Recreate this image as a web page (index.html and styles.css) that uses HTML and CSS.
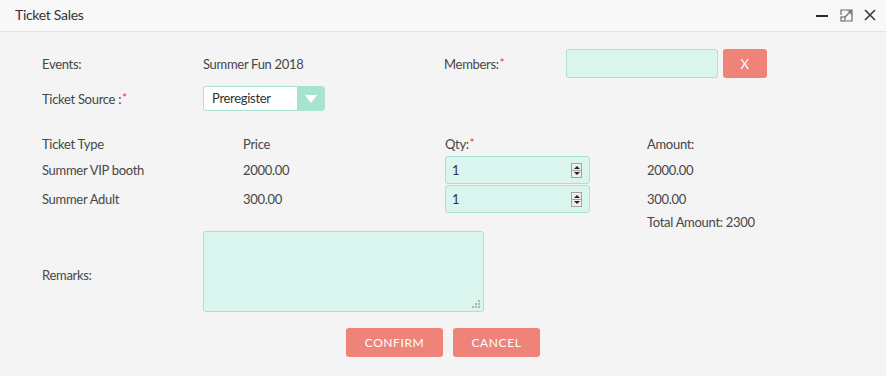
FILE: index.html
```html
<!DOCTYPE html>
<html lang="en">
<head>
    <meta charset="UTF-8">
    <title>Ticket Sales</title>
    <link rel="stylesheet" href="styles.css">
</head>
<body>
    <div class="dialog">
        <div class="dialog-header">
            <span class="dialog-title">Ticket Sales</span>
            <div class="dialog-tools">
                <svg width="13" height="12" viewBox="0 0 13 12"><path d="M0 7h12" stroke="#2b2b2b" stroke-width="2"/></svg>
                <svg width="13" height="13" viewBox="0 0 13 13" fill="none" stroke="#6d6d6d" stroke-width="1.2">
                    <path d="M1 6V1h11v11H6"/>
                    <rect x="1" y="8" width="4" height="4"/>
                    <path d="M5 8l6-6M7.5 2H11v3.5"/>
                </svg>
                <svg width="12" height="12" viewBox="0 0 12 12"><path d="M1 1l10 10M11 1L1 11" stroke="#3a3a3a" stroke-width="1.6"/></svg>
            </div>
        </div>

        <div class="dialog-body">
            <div class="row-event">
                <span>Events:</span>
                <span>Summer Fun 2018</span>
                <span>Members:<em class="req">*</em></span>
                <input type="text" class="field members-field">
                <button class="btn btn-clear">X</button>
            </div>

            <div class="row-source">
                <span>Ticket Source :<em class="req">*</em></span>
                <div class="select">
                    <span class="select-value">Preregister</span>
                    <span class="select-arrow"></span>
                </div>
            </div>

            <div class="ticket-table">
                <div class="ticket-head">
                    <span>Ticket Type</span>
                    <span>Price</span>
                    <span>Qty:<em class="req">*</em></span>
                    <span>Amount:</span>
                </div>
                <div class="ticket-row">
                    <span>Summer VIP booth</span>
                    <span>2000.00</span>
                    <div class="field qty-field"><span>1</span><span class="spinner"></span></div>
                    <span>2000.00</span>
                </div>
                <div class="ticket-row">
                    <span>Summer Adult</span>
                    <span>300.00</span>
                    <div class="field qty-field"><span>1</span><span class="spinner"></span></div>
                    <span>300.00</span>
                </div>
                <div class="ticket-total">
                    <span>Total Amount: 2300</span>
                </div>
            </div>

            <div class="row-remarks">
                <span class="remarks-label">Remarks:</span>
                <div class="remarks-wrap">
                    <textarea class="field remarks-field"></textarea>
                    <svg class="grip" width="8" height="8" viewBox="0 0 8 8" fill="#a9b4b0">
                        <rect x="6" y="0" width="2" height="2"/>
                        <rect x="3" y="3" width="2" height="2"/>
                        <rect x="6" y="3" width="2" height="2"/>
                        <rect x="0" y="6" width="2" height="2"/>
                        <rect x="3" y="6" width="2" height="2"/>
                        <rect x="6" y="6" width="2" height="2"/>
                    </svg>
                </div>
            </div>

            <div class="actions">
                <button class="btn btn-confirm">CONFIRM</button>
                <button class="btn btn-cancel">CANCEL</button>
            </div>
        </div>
    </div>
</body>
</html>
```

FILE: styles.css
```css
body {
    margin: 0;
    font-family: Lato, "Open Sans", sans-serif;
    font-size: 13px;
    letter-spacing: -0.3px;
    color: #464646;
    background-color: #f4f4f4;
}

.dialog {
    width: 886px;
    height: 376px;
}

.dialog-header {
    height: 31px;
    background-color: #f8f8f8;
    border-bottom: 1px solid #e4e4e4;
    display: flex;
    align-items: center;
    justify-content: space-between;
    padding: 0 10px 0 15px;
}

.dialog-title {
    font-size: 14px;
    color: #333;
    margin-top: -2px;
}

.dialog-tools {
    display: flex;
    align-items: center;
    gap: 11px;
    margin-top: -1px;
}

.dialog-body {
    padding: 17px 0 0 42px;
}

.req {
    color: #e0303a;
    font-style: normal;
    vertical-align: top;
    font-size: 11px;
    margin-left: 1px;
}

.field {
    background-color: #daf5ee;
    border: 1px solid #a8e2d1;
    border-radius: 3px;
    box-sizing: border-box;
    font-family: inherit;
    font-size: 13px;
    color: #333;
}

.row-event {
    display: grid;
    grid-template-columns: 161px 241px 122px 152px 49px;
    align-items: center;
    height: 29px;
}

.members-field {
    height: 29px;
    width: 152px;
}

.btn {
    border: none;
    border-radius: 3px;
    background-color: #f08379;
    color: #fff;
    font-family: inherit;
    font-size: 12px;
    letter-spacing: 0.6px;
    height: 29px;
}

.btn-clear {
    margin-left: 5px;
    width: 44px;
    font-size: 13px;
}

.row-source {
    display: grid;
    grid-template-columns: 161px auto;
    align-items: center;
    margin-top: 8px;
    height: 25px;
}

.select {
    display: flex;
    width: 122px;
    height: 25px;
    box-sizing: border-box;
    border: 1px solid #a8e2d1;
    border-radius: 3px;
    background-color: #fff;
    overflow: hidden;
}

.select-value {
    flex: 1;
    padding-left: 8px;
    line-height: 23px;
    color: #333;
}

.select-arrow {
    width: 27px;
    background-color: #a8e2d1;
    display: flex;
    align-items: center;
    justify-content: center;
}

.select-arrow::after {
    content: "";
    border-left: 6px solid transparent;
    border-right: 6px solid transparent;
    border-top: 8px solid #fff;
}

.ticket-table {
    margin-top: 21px;
}

.ticket-head,
.ticket-row,
.ticket-total {
    display: grid;
    grid-template-columns: 201px 202px 202px auto;
    align-items: center;
}

.ticket-head {
    height: 24px;
}

.ticket-row {
    height: 28px;
}

.ticket-row + .ticket-row {
    margin-top: 1px;
}

.ticket-total {
    height: 18px;
}

.ticket-total span {
    grid-column: 4;
}

.qty-field {
    width: 145px;
    height: 28px;
    display: flex;
    align-items: center;
    justify-content: space-between;
    padding: 0 7px 0 6px;
}

.spinner {
    width: 11px;
    height: 15px;
    box-sizing: border-box;
    border: 1px solid #a3a3a3;
    background:
        linear-gradient(#a3a3a3, #a3a3a3) center / 100% 1px no-repeat,
        #eeeeee;
    position: relative;
}

.spinner::before,
.spinner::after {
    content: "";
    position: absolute;
    left: 1.5px;
    border-left: 3px solid transparent;
    border-right: 3px solid transparent;
}

.spinner::before {
    top: 2px;
    border-bottom: 3px solid #222;
}

.spinner::after {
    bottom: 2px;
    border-top: 3px solid #222;
}

.row-remarks {
    display: grid;
    grid-template-columns: 161px auto;
    align-items: center;
}

.remarks-label {
    padding-top: 7px;
}

.remarks-wrap {
    position: relative;
    width: 281px;
}

.remarks-field {
    width: 281px;
    height: 81px;
    resize: none;
    margin: 0;
    display: block;
}

.grip {
    position: absolute;
    right: 4px;
    bottom: 4px;
}

.actions {
    display: flex;
    justify-content: center;
    gap: 10px;
    margin: 16px 0 0 -42px;
}

.btn-confirm {
    width: 97px;
}

.btn-cancel {
    width: 87px;
}
```
